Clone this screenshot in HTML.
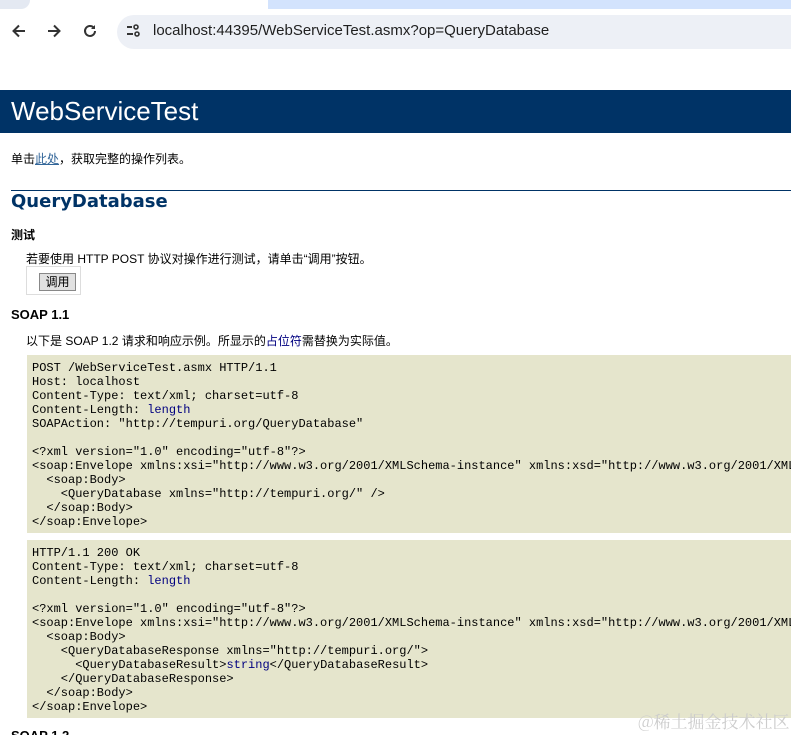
<!DOCTYPE html>
<html><head><meta charset="utf-8"><style>
html,body{margin:0;width:791px;height:735px;overflow:hidden}
body{background:#fff;font-family:"Liberation Sans","Noto Sans CJK SC",sans-serif;position:relative}
.tabs{position:absolute;left:0;top:0;width:791px;height:9px;background:#d3e3fd}
.tab{position:absolute;left:12px;top:0;width:256px;height:9px;background:#fff}
.tabl{position:absolute;left:0;top:0;width:30px;height:9px;background:#e4e9f2;border-radius:0 0 10px 0}
.addr{position:absolute;left:117px;top:15px;width:674px;height:34px;background:#edf0f6;border-radius:17px 0 0 17px}
.url{position:absolute;left:153px;top:22px;font-size:15px;color:#1f1f1f}
.ic{position:absolute;top:22px}
.hdr{position:absolute;left:0;top:90px;width:791px;height:43px;background:#003366;color:#fff;font-size:26px;line-height:43px;padding-left:11px;box-sizing:border-box}
.t{position:absolute;font-size:12px;color:#000;white-space:nowrap}
a{color:#336699;text-decoration:underline}
.hr{position:absolute;left:11px;top:190px;width:780px;height:1px;background:#003366}
.h2{position:absolute;left:11px;top:191px;font-size:18px;font-weight:bold;color:#003366;font-family:"DejaVu Sans",sans-serif}
.btnbox{position:absolute;left:26px;top:266px;width:55px;height:29px;border:1px solid #ddd;box-sizing:border-box}
.btn{position:absolute;left:39px;top:273px;width:37px;height:18px;background:#e1e1e1;border:1px solid #888;box-sizing:border-box;font-size:12px;text-align:center;line-height:16px}
pre{position:absolute;left:27px;margin:0;background:#e5e5cc;width:764px;overflow:hidden;font-family:"Liberation Mono",monospace;font-size:12px;line-height:14px;padding:6px 0 6px 5px;box-sizing:border-box;color:#000}
.k{color:#000080}
.wm{position:absolute;left:638px;top:708px;font-size:17px;color:#ccc;font-family:"Noto Serif CJK SC",serif;white-space:nowrap}
</style></head><body>
<div class="tabs"><div class="tab"></div><div class="tabl"></div></div>
<svg class="ic" style="left:10px" width="18" height="18" viewBox="0 0 18 18"><path d="M15 9H4M9 3.5 3.5 9 9 14.5" stroke="#333" stroke-width="2" fill="none"/></svg>
<svg class="ic" style="left:45px" width="18" height="18" viewBox="0 0 18 18"><path d="M3 9h11M9 3.5 14.5 9 9 14.5" stroke="#333" stroke-width="2" fill="none"/></svg>
<svg class="ic" style="left:81px" width="18" height="18" viewBox="0 0 18 18"><path d="M14 9a5 5 0 1 1-1.5-3.6" stroke="#333" stroke-width="2" fill="none"/><path d="M14 3v4h-4z" fill="#333"/></svg>
<div class="addr"></div>
<svg class="ic" style="left:125px;top:23px" width="16" height="16" viewBox="0 0 16 16"><path d="M2 4h5M2 11h6" stroke="#333" stroke-width="2"/><circle cx="11" cy="4" r="2" stroke="#333" stroke-width="1.6" fill="none"/><circle cx="12" cy="11" r="2" stroke="#333" stroke-width="1.6" fill="none"/></svg>
<div class="url">localhost:44395/WebServiceTest.asmx?op=QueryDatabase</div>
<div class="hdr">WebServiceTest</div>
<div class="t" style="left:11px;top:150px">单击<a>此处</a>，获取完整的操作列表。</div>
<div class="hr"></div>
<div class="h2">QueryDatabase</div>
<div class="t" style="left:11px;top:226px;font-weight:bold">测试</div>
<div class="t" style="left:26px;top:250px">若要使用 HTTP POST 协议对操作进行测试，请单击“调用”按钮。</div>
<div class="btnbox"></div><div class="btn">调用</div>
<div class="t" style="left:11px;top:307px;font-weight:bold;font-size:13px">SOAP 1.1</div>
<div class="t" style="left:26px;top:332px">以下是 SOAP 1.2 请求和响应示例。所显示的<span class="k">占位符</span>需替换为实际值。</div>
<pre style="top:355px;height:178px">POST /WebServiceTest.asmx HTTP/1.1
Host: localhost
Content-Type: text/xml; charset=utf-8
Content-Length: <span class="k">length</span>
SOAPAction: "http://tempuri.org/QueryDatabase"

&lt;?xml version="1.0" encoding="utf-8"?&gt;
&lt;soap:Envelope xmlns:xsi="http://www.w3.org/2001/XMLSchema-instance" xmlns:xsd="http://www.w3.org/2001/XMLSchema"
  &lt;soap:Body&gt;
    &lt;QueryDatabase xmlns="http://tempuri.org/" /&gt;
  &lt;/soap:Body&gt;
&lt;/soap:Envelope&gt;</pre>
<pre style="top:540px;height:178px">HTTP/1.1 200 OK
Content-Type: text/xml; charset=utf-8
Content-Length: <span class="k">length</span>

&lt;?xml version="1.0" encoding="utf-8"?&gt;
&lt;soap:Envelope xmlns:xsi="http://www.w3.org/2001/XMLSchema-instance" xmlns:xsd="http://www.w3.org/2001/XMLSchema"
  &lt;soap:Body&gt;
    &lt;QueryDatabaseResponse xmlns="http://tempuri.org/"&gt;
      &lt;QueryDatabaseResult&gt;<span class="k">string</span>&lt;/QueryDatabaseResult&gt;
    &lt;/QueryDatabaseResponse&gt;
  &lt;/soap:Body&gt;
&lt;/soap:Envelope&gt;</pre>
<div class="t" style="left:11px;top:728px;font-weight:bold;font-size:13px">SOAP 1.2</div>
<div class="wm">@稀土掘金技术社区</div>
</body></html>
